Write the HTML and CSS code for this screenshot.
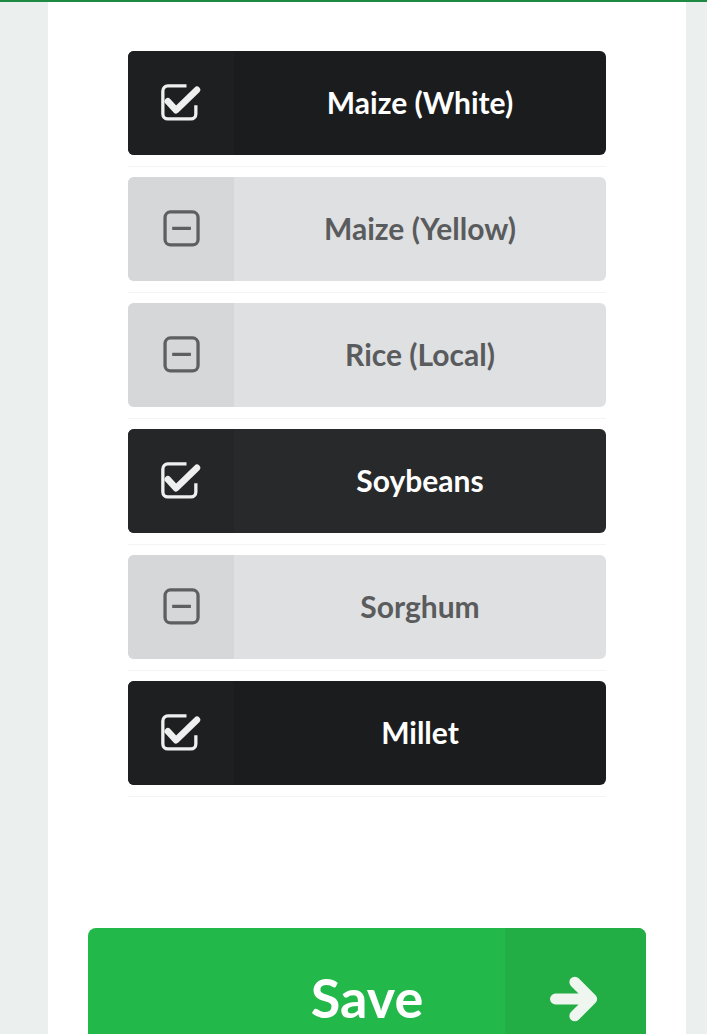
FILE: index.html
```html
<!DOCTYPE html>
<html>
<head>
<meta charset="utf-8">
<link rel="stylesheet" href="styles.css">
</head>
<body>
<div class="topline"></div>
<div class="panel">
  <ul class="list">
    <li class="row"><div class="item on"><span class="ico"><svg viewBox="0 0 40 40" class="chk"><path d="M25 4.5H8a4.5 4.5 0 0 0-4.5 4.5v21a4.5 4.5 0 0 0 4.5 4.5h21a4.5 4.5 0 0 0 4.5-4.5v-8" class="box"/><path d="M8 18.5l7.5 8L34.5 8" class="tick"/></svg></span><span class="lbl">Maize (White)</span></div></li>
    <li class="row"><div class="item off"><span class="ico"><svg viewBox="0 0 40 40" class="chk"><rect x="5.5" y="4.5" width="30" height="30" rx="5" class="box"/><path d="M12 19.5h17" class="bar"/></svg></span><span class="lbl">Maize (Yellow)</span></div></li>
    <li class="row"><div class="item off"><span class="ico"><svg viewBox="0 0 40 40" class="chk"><rect x="5.5" y="4.5" width="30" height="30" rx="5" class="box"/><path d="M12 19.5h17" class="bar"/></svg></span><span class="lbl">Rice (Local)</span></div></li>
    <li class="row"><div class="item on hover"><span class="ico"><svg viewBox="0 0 40 40" class="chk"><path d="M25 4.5H8a4.5 4.5 0 0 0-4.5 4.5v21a4.5 4.5 0 0 0 4.5 4.5h21a4.5 4.5 0 0 0 4.5-4.5v-8" class="box"/><path d="M8 18.5l7.5 8L34.5 8" class="tick"/></svg></span><span class="lbl">Soybeans</span></div></li>
    <li class="row"><div class="item off"><span class="ico"><svg viewBox="0 0 40 40" class="chk"><rect x="5.5" y="4.5" width="30" height="30" rx="5" class="box"/><path d="M12 19.5h17" class="bar"/></svg></span><span class="lbl">Sorghum</span></div></li>
    <li class="row"><div class="item on"><span class="ico"><svg viewBox="0 0 40 40" class="chk"><path d="M25 4.5H8a4.5 4.5 0 0 0-4.5 4.5v21a4.5 4.5 0 0 0 4.5 4.5h21a4.5 4.5 0 0 0 4.5-4.5v-8" class="box"/><path d="M8 18.5l7.5 8L34.5 8" class="tick"/></svg></span><span class="lbl">Millet</span></div></li>
  </ul>
  <button class="save"><span class="save-lbl">Save</span><span class="save-ico"><svg viewBox="0 0 48 48" class="arrow"><path d="M7 24h28M23 10l14 14-14 14"/></svg></span></button>
</div>
</body>
</html>
```
FILE: styles.css
```css
html, body {
  margin: 0;
  padding: 0;
  height: 100%;
  overflow: hidden;
}
body {
  background: #ebefee;
  font-family: Lato, "Open Sans", Arial, sans-serif;
}
.topline {
  height: 2px;
  background: #1f8a41;
}
.panel {
  background: #ffffff;
  margin: 0 21px 0 48px;
  padding: 49px 40px 0 40px;
  min-height: 1100px;
}
.list {
  list-style: none;
  margin: 0 40px;
  padding: 0;
}
.row {
  padding-bottom: 11px;
  border-bottom: 1px solid #f4f4f4;
  margin-bottom: 10px;
}
.item {
  display: flex;
  height: 104px;
  border-radius: 6px;
  overflow: hidden;
}
.ico {
  width: 106px;
  display: flex;
  align-items: center;
  justify-content: center;
  flex: none;
}
.lbl {
  flex: 1;
  display: flex;
  align-items: center;
  justify-content: center;
  font-weight: 700;
  font-size: 30px;
  padding-bottom: 3px;
}
.chk {
  width: 44px;
  height: 44px;
  fill: none;
}
.item.on { background: #1b1c1e; color: #ffffff; }
.item.on .ico { background: #1e1f21; }
.item.on.hover { background: #28292b; }
.item.on.hover .ico { background: #252628; }
.item.on .box { stroke: #efefef; stroke-width: 3; }
.item.on .tick { stroke: #efefef; stroke-width: 6; stroke-linecap: round; stroke-linejoin: round; }
.item.off { background: #dfe0e2; color: #5a5b5d; }
.item.off .ico { background: #d6d7d9; }
.item.off .box { stroke: #5e5f61; stroke-width: 3; }
.item.off .bar { stroke: #5e5f61; stroke-width: 3; }
.save {
  position: relative;
  display: flex;
  align-items: center;
  justify-content: center;
  width: 100%;
  height: 142px;
  margin-top: 131px;
  border: 0;
  border-radius: 8px;
  background: #22b84a;
  color: #ffffff;
  font-family: Lato, "Open Sans", Arial, sans-serif;
  font-weight: 700;
  font-size: 54px;
  padding: 0 0 4px 0;
  overflow: hidden;
}
.save-ico {
  position: absolute;
  top: 0;
  right: 0;
  bottom: 0;
  width: 141px;
  background: #22ae44;
  display: flex;
  align-items: center;
  justify-content: center;
}
.arrow {
  width: 58px;
  height: 58px;
  fill: none;
  stroke: #eef6ef;
  stroke-width: 9;
  stroke-linecap: round;
  stroke-linejoin: round;
}
```
